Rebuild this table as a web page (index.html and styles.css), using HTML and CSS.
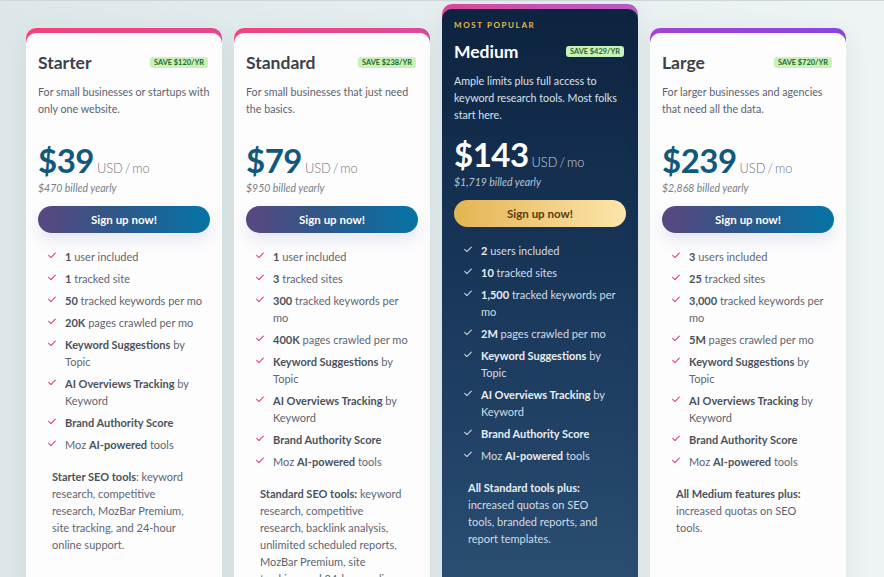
FILE: index.html
```html
<!DOCTYPE html>
<html lang="en">
<head>
<meta charset="utf-8">
<title>Pricing</title>
<link rel="stylesheet" href="styles.css">
</head>
<body>
<main class="plans">

  <section class="card card-starter">
    <div class="inner">
      <div class="head">
        <h2 class="name">Starter</h2>
        <span class="save">SAVE $120/YR</span>
      </div>
      <p class="desc">For small businesses or startups with only one website.</p>
      <div class="price"><span class="amount">$39</span><span class="per">USD / mo</span></div>
      <p class="billed">$470 billed yearly</p>
      <a class="btn" href="#">Sign up now!</a>
      <ul class="features">
        <li><svg class="chk" viewBox="0 0 9 7"><path d="M0.8 3.4 L3.3 5.8 L8.2 0.9"/></svg><span><b>1</b> user included</span></li>
        <li><svg class="chk" viewBox="0 0 9 7"><path d="M0.8 3.4 L3.3 5.8 L8.2 0.9"/></svg><span><b>1</b> tracked site</span></li>
        <li><svg class="chk" viewBox="0 0 9 7"><path d="M0.8 3.4 L3.3 5.8 L8.2 0.9"/></svg><span><b>50</b> tracked keywords per mo</span></li>
        <li><svg class="chk" viewBox="0 0 9 7"><path d="M0.8 3.4 L3.3 5.8 L8.2 0.9"/></svg><span><b>20K</b> pages crawled per mo</span></li>
        <li><svg class="chk" viewBox="0 0 9 7"><path d="M0.8 3.4 L3.3 5.8 L8.2 0.9"/></svg><span><b>Keyword Suggestions</b> by Topic</span></li>
        <li><svg class="chk" viewBox="0 0 9 7"><path d="M0.8 3.4 L3.3 5.8 L8.2 0.9"/></svg><span><b>AI Overviews Tracking</b> by Keyword</span></li>
        <li><svg class="chk" viewBox="0 0 9 7"><path d="M0.8 3.4 L3.3 5.8 L8.2 0.9"/></svg><span><b>Brand Authority Score</b></span></li>
        <li><svg class="chk" viewBox="0 0 9 7"><path d="M0.8 3.4 L3.3 5.8 L8.2 0.9"/></svg><span>Moz <b>AI-powered</b> tools</span></li>
      </ul>
      <p class="extra"><b>Starter SEO tools</b>: keyword research, competitive research, MozBar Premium, site tracking, and 24-hour online support.</p>
    </div>
  </section>

  <section class="card card-standard">
    <div class="inner">
      <div class="head">
        <h2 class="name">Standard</h2>
        <span class="save">SAVE $238/YR</span>
      </div>
      <p class="desc">For small businesses that just need the basics.</p>
      <div class="price"><span class="amount">$79</span><span class="per">USD / mo</span></div>
      <p class="billed">$950 billed yearly</p>
      <a class="btn" href="#">Sign up now!</a>
      <ul class="features">
        <li><svg class="chk" viewBox="0 0 9 7"><path d="M0.8 3.4 L3.3 5.8 L8.2 0.9"/></svg><span><b>1</b> user included</span></li>
        <li><svg class="chk" viewBox="0 0 9 7"><path d="M0.8 3.4 L3.3 5.8 L8.2 0.9"/></svg><span><b>3</b> tracked sites</span></li>
        <li><svg class="chk" viewBox="0 0 9 7"><path d="M0.8 3.4 L3.3 5.8 L8.2 0.9"/></svg><span><b>300</b> tracked keywords per mo</span></li>
        <li><svg class="chk" viewBox="0 0 9 7"><path d="M0.8 3.4 L3.3 5.8 L8.2 0.9"/></svg><span><b>400K</b> pages crawled per mo</span></li>
        <li><svg class="chk" viewBox="0 0 9 7"><path d="M0.8 3.4 L3.3 5.8 L8.2 0.9"/></svg><span><b>Keyword Suggestions</b> by Topic</span></li>
        <li><svg class="chk" viewBox="0 0 9 7"><path d="M0.8 3.4 L3.3 5.8 L8.2 0.9"/></svg><span><b>AI Overviews Tracking</b> by Keyword</span></li>
        <li><svg class="chk" viewBox="0 0 9 7"><path d="M0.8 3.4 L3.3 5.8 L8.2 0.9"/></svg><span><b>Brand Authority Score</b></span></li>
        <li><svg class="chk" viewBox="0 0 9 7"><path d="M0.8 3.4 L3.3 5.8 L8.2 0.9"/></svg><span>Moz <b>AI-powered</b> tools</span></li>
      </ul>
      <p class="extra"><b>Standard SEO tools:</b> keyword research, competitive research, backlink analysis, unlimited scheduled reports, MozBar Premium, site tracking, and 24-hour online support.</p>
    </div>
  </section>

  <section class="card card-medium">
    <div class="inner">
      <p class="popular">MOST POPULAR</p>
      <div class="head">
        <h2 class="name">Medium</h2>
        <span class="save">SAVE $429/YR</span>
      </div>
      <p class="desc">Ample limits plus full access to keyword research tools. Most folks start here.</p>
      <div class="price"><span class="amount">$143</span><span class="per">USD / mo</span></div>
      <p class="billed">$1,719 billed yearly</p>
      <a class="btn" href="#">Sign up now!</a>
      <ul class="features">
        <li><svg class="chk" viewBox="0 0 9 7"><path d="M0.8 3.4 L3.3 5.8 L8.2 0.9"/></svg><span><b>2</b> users included</span></li>
        <li><svg class="chk" viewBox="0 0 9 7"><path d="M0.8 3.4 L3.3 5.8 L8.2 0.9"/></svg><span><b>10</b> tracked sites</span></li>
        <li><svg class="chk" viewBox="0 0 9 7"><path d="M0.8 3.4 L3.3 5.8 L8.2 0.9"/></svg><span><b>1,500</b> tracked keywords per mo</span></li>
        <li><svg class="chk" viewBox="0 0 9 7"><path d="M0.8 3.4 L3.3 5.8 L8.2 0.9"/></svg><span><b>2M</b> pages crawled per mo</span></li>
        <li><svg class="chk" viewBox="0 0 9 7"><path d="M0.8 3.4 L3.3 5.8 L8.2 0.9"/></svg><span><b>Keyword Suggestions</b> by Topic</span></li>
        <li><svg class="chk" viewBox="0 0 9 7"><path d="M0.8 3.4 L3.3 5.8 L8.2 0.9"/></svg><span><b>AI Overviews Tracking</b> by Keyword</span></li>
        <li><svg class="chk" viewBox="0 0 9 7"><path d="M0.8 3.4 L3.3 5.8 L8.2 0.9"/></svg><span><b>Brand Authority Score</b></span></li>
        <li><svg class="chk" viewBox="0 0 9 7"><path d="M0.8 3.4 L3.3 5.8 L8.2 0.9"/></svg><span>Moz <b>AI-powered</b> tools</span></li>
      </ul>
      <p class="extra"><b>All Standard tools plus:</b> increased quotas on SEO tools, branded reports, and report templates.</p>
    </div>
  </section>

  <section class="card card-large">
    <div class="inner">
      <div class="head">
        <h2 class="name">Large</h2>
        <span class="save">SAVE $720/YR</span>
      </div>
      <p class="desc">For larger businesses and agencies that need all the data.</p>
      <div class="price"><span class="amount">$239</span><span class="per">USD / mo</span></div>
      <p class="billed">$2,868 billed yearly</p>
      <a class="btn" href="#">Sign up now!</a>
      <ul class="features">
        <li><svg class="chk" viewBox="0 0 9 7"><path d="M0.8 3.4 L3.3 5.8 L8.2 0.9"/></svg><span><b>3</b> users included</span></li>
        <li><svg class="chk" viewBox="0 0 9 7"><path d="M0.8 3.4 L3.3 5.8 L8.2 0.9"/></svg><span><b>25</b> tracked sites</span></li>
        <li><svg class="chk" viewBox="0 0 9 7"><path d="M0.8 3.4 L3.3 5.8 L8.2 0.9"/></svg><span><b>3,000</b> tracked keywords per mo</span></li>
        <li><svg class="chk" viewBox="0 0 9 7"><path d="M0.8 3.4 L3.3 5.8 L8.2 0.9"/></svg><span><b>5M</b> pages crawled per mo</span></li>
        <li><svg class="chk" viewBox="0 0 9 7"><path d="M0.8 3.4 L3.3 5.8 L8.2 0.9"/></svg><span><b>Keyword Suggestions</b> by Topic</span></li>
        <li><svg class="chk" viewBox="0 0 9 7"><path d="M0.8 3.4 L3.3 5.8 L8.2 0.9"/></svg><span><b>AI Overviews Tracking</b> by Keyword</span></li>
        <li><svg class="chk" viewBox="0 0 9 7"><path d="M0.8 3.4 L3.3 5.8 L8.2 0.9"/></svg><span><b>Brand Authority Score</b></span></li>
        <li><svg class="chk" viewBox="0 0 9 7"><path d="M0.8 3.4 L3.3 5.8 L8.2 0.9"/></svg><span>Moz <b>AI-powered</b> tools</span></li>
      </ul>
      <p class="extra"><b>All Medium features plus:</b> increased quotas on SEO tools.</p>
    </div>
  </section>

</main>
</body>
</html>
```

FILE: styles.css
```css
* { box-sizing: border-box; margin: 0; padding: 0; }

html, body {
  width: 884px;
  height: 577px;
  overflow: hidden;
}

body {
  font-family: Lato, "Open Sans", "Liberation Sans", sans-serif;
  color: #5b636e;
  background: linear-gradient(90deg, #dde7e9 0%, #e5edee 45%, #eef4f4 100%);
  border-top: 1px solid #cdd6d8;
}

.plans {
  display: flex;
  align-items: flex-start;
  gap: 12px;
  padding: 3px 0 0 26px;
}

.card {
  width: 196px;
  margin-top: 24px;
  padding-top: 5px;
  border-radius: 10px;
  box-shadow: 0 6px 26px rgba(40, 70, 80, 0.08);
}

.card-starter  { background: linear-gradient(90deg, #f5417a, #e7468f); }
.card-standard { background: linear-gradient(90deg, #f2437d, #dc4a9c); }
.card-medium   { background: linear-gradient(90deg, #d84897, #b65bc8); margin-top: 0; }
.card-large    { background: linear-gradient(90deg, #a642cf, #8a44e2); }

.inner {
  min-height: 640px;
  padding: 18px 12px 0 12px;
  background: #fdfdfe;
  border-radius: 10px 10px 0 0;
}

.card-medium .inner {
  padding-top: 11px;
  background: linear-gradient(180deg, #0d233f 0%, #163355 35%, #24466a 75%, #2f5478 100%);
  color: #d9e1ea;
}

.popular {
  font-size: 8px;
  line-height: 10px;
  font-weight: 700;
  letter-spacing: 1.6px;
  color: #e8b84c;
  margin-bottom: 10px;
}

.head {
  display: flex;
  align-items: center;
  justify-content: space-between;
  height: 22px;
}

.name {
  font-size: 17.5px;
  font-weight: 700;
  color: #3b424a;
}

.card-medium .name { color: #ffffff; }

.save {
  font-size: 7.4px;
  font-weight: 700;
  line-height: 11px;
  padding: 0 4px;
  border-radius: 3px;
  background: #c6f2bd;
  color: #2c6527;
  margin-right: 2px;
}

.desc {
  margin-top: 10px;
  margin-right: -2px;
  min-height: 46px;
  font-size: 10.7px;
  line-height: 17px;
}

.price {
  margin-top: 14px;
  display: flex;
  align-items: baseline;
  gap: 3px;
}

.amount {
  font-size: 33px;
  line-height: 34px;
  font-weight: 700;
  color: #10597c;
  letter-spacing: -0.5px;
}

.card-medium .amount { color: #ffffff; }

.per {
  font-size: 12.8px;
  font-weight: 300;
  color: #6d7580;
  word-spacing: -1.5px;
}

.card-medium .per { color: #c9d3de; }

.billed {
  margin-top: 3px;
  font-size: 10.5px;
  line-height: 16px;
  font-style: italic;
  font-weight: 400;
  color: #767e88;
}

.card-medium .billed { color: #b8c4d0; }

.btn {
  display: flex;
  align-items: center;
  justify-content: center;
  height: 27px;
  margin-top: 10px;
  border-radius: 14px;
  font-size: 11.5px;
  font-weight: 700;
  color: #ffffff;
  text-decoration: none;
  background: linear-gradient(90deg, #5a4780 0%, #2f5788 45%, #0674a7 100%);
  box-shadow: 0 8px 16px rgba(70, 80, 140, 0.12);
}

.card-medium .btn {
  color: #5a3a12;
  background: linear-gradient(90deg, #e4b451 0%, #f1cf84 55%, #fde6aa 100%);
  box-shadow: none;
}

.features {
  list-style: none;
  margin-top: 15px;
  padding: 0 8px 0 10px;
  display: flex;
  flex-direction: column;
  gap: 5px;
}

.features li {
  display: flex;
  align-items: flex-start;
  gap: 9px;
  font-size: 11px;
  line-height: 17px;
  color: #5d6570;
}

.features b {
  font-weight: 700;
  color: #4a525c;
}

.card-medium .features li { color: #d4dce6; }
.card-medium .features b { color: #e9eef4; }

.chk {
  flex: 0 0 8px;
  width: 8px;
  height: 7px;
  margin-top: 4px;
  fill: none;
  stroke: #e8396c;
  stroke-width: 1.2;
  stroke-linecap: round;
  stroke-linejoin: round;
}

.card-medium .chk { stroke: #cfd8e3; }

.extra {
  margin-top: 15px;
  padding: 0 14px;
  font-size: 11px;
  line-height: 17px;
  color: #5d6570;
}

.extra b {
  font-weight: 700;
  color: #4a525c;
}

.card-medium .extra { color: #d4dce6; }
.card-medium .extra b { color: #e9eef4; }
```
